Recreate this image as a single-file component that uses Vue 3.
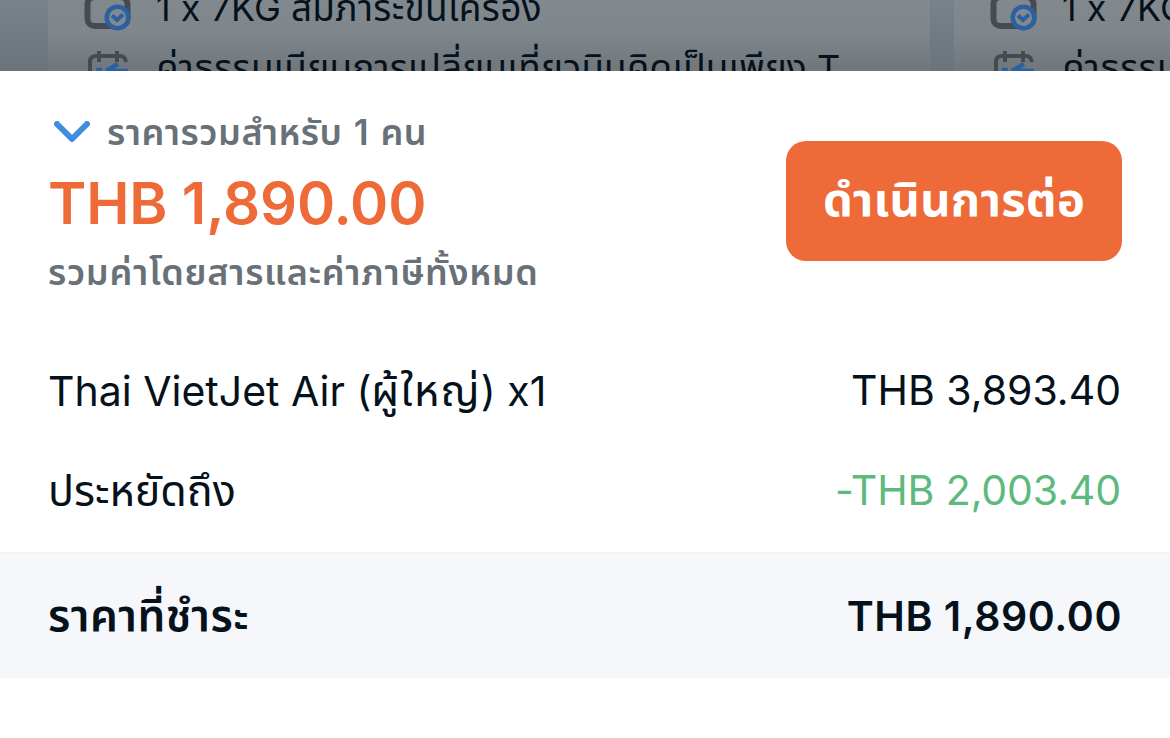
<script setup>
import { ref } from 'vue'

const aberto = ref(true)

const tarifas = [
  { id: 1, bagagem: '1 x 7KG', bagagemThai: 'สัมภาระขึ้นเครื่อง', taxa: 'ค่าธรรมเนียมการเปลี่ยนเที่ยวบินคิดเป็นเพียง', moeda: 'T' },
  { id: 2, bagagem: '1 x 7KG', bagagemThai: 'สัมภาระขึ้นเครื่อง', taxa: 'ค่าธรรมเนียมการเปลี่ยนเที่ยวบินคิดเป็นเพียง', moeda: 'T' }
]

const total = 'THB 1,890.00'
</script>

<template>
<div class="tela">
  <section class="fundo">
    <div class="tarifa" v-for="tarifa in tarifas" :key="tarifa.id">
      <div class="linha">
        <svg class="icone" viewBox="0 0 48 48">
          <rect x="3.5" y="13" width="40" height="29" rx="7" fill="none" stroke="#454b51" stroke-width="6" />
          <circle cx="33.5" cy="33.5" r="13" fill="#2c609f" />
          <circle cx="33.5" cy="33.5" r="8.5" fill="#828a91" />
          <path d="M28 31.5l5 4.5 6-5.5" fill="none" stroke="#2c609f" stroke-width="4" />
        </svg>
        <p><span class="bagagem">{{ tarifa.bagagem }}</span> <span class="bagagem-thai">{{ tarifa.bagagemThai }}</span></p>
      </div>
      <div class="linha">
        <svg class="icone" viewBox="0 0 48 48">
          <path d="M42 14q-1-6-6-6H12q-6 0-6 6v27q0 5 6 5h24M15 3v11M33 3v11" fill="none" stroke="#454b51" stroke-width="4" />
          <path d="M12 22h6M44 23H26M22 23l12-7M23 23l9 8" fill="none" stroke="#2c609f" stroke-width="4.5" />
        </svg>
        <p><span class="taxa">{{ tarifa.taxa }}</span> <span>{{ tarifa.moeda }}</span></p>
      </div>
    </div>
  </section>

  <section class="painel">
    <header class="resumo">
      <div class="valores">
        <div class="titulo" @click="aberto = !aberto">
          <svg class="seta" :class="{ fechada: !aberto }" viewBox="0 0 36 22">
            <path d="M3 3l15 15L33 3" />
          </svg>
          <p><span class="thai">ราคารวมสำหรับ</span> <span class="pessoas">1</span> <span class="thai">คน</span></p>
        </div>
        <h1>{{ total }}</h1>
        <p class="nota">รวมค่าโดยสารและค่าภาษีทั้งหมด</p>
      </div>
      <button class="continuar">ดำเนินการต่อ</button>
    </header>

    <div class="detalhes" v-if="aberto">
      <div class="item">
        <p>Thai VietJet Air (<span class="adulto">ผู้ใหญ่</span>) x1</p>
        <p class="preco">THB 3,893.40</p>
      </div>
      <div class="item">
        <p class="economia">ประหยัดถึง</p>
        <p class="preco desconto">-THB 2,003.40</p>
      </div>
    </div>

    <footer class="pagar">
      <p class="rotulo">ราคาที่ชำระ</p>
      <p class="preco">{{ total }}</p>
    </footer>
  </section>
</div>
</template>

<style>
body {
  margin: 0;
  background: #fff;
}
</style>

<style scoped>
.tela {
  height: 738px;
  overflow: hidden;
  background: #fff;
  color: #06121b;
  font-family: "Inter", "Noto Sans Thai", sans-serif;
  font-feature-settings: "calt" 0;
}

p,
h1 {
  margin: 0;
  white-space: nowrap;
}

.fundo {
  display: flex;
  gap: 24px;
  height: 71px;
  padding-left: 48px;
  overflow: hidden;
  background: linear-gradient(#78828a, #6b747c);
}

.tarifa {
  flex: 0 0 882px;
  box-sizing: border-box;
  padding-left: 36px;
  background: linear-gradient(#82898e 0%, #80878c 45%, #70777c 100%);
  overflow: hidden;
}

.linha {
  display: flex;
  align-items: center;
  gap: 24px;
  height: 58px;
  margin-top: -21px;
  font-size: 36px;
  line-height: 58px;
}

.linha + .linha {
  height: 70px;
  margin-top: 0;
}

.linha + .linha p {
  padding-bottom: 8px;
}

.bagagem-thai {
  font-size: 37px;
  letter-spacing: 0.3px;
}

.taxa {
  font-size: 37px;
  letter-spacing: 0.14px;
}

.icone {
  flex: none;
  width: 48px;
  height: 48px;
}

.linha:first-child .icone {
  margin-top: -1px;
}

.painel {
  height: 667px;
  background: #fff;
}

.resumo {
  display: flex;
  justify-content: space-between;
  align-items: flex-start;
  height: 270px;
  padding: 0 48px;
}

.valores {
  padding-top: 36px;
}

.titulo {
  display: flex;
  align-items: center;
  gap: 17px;
  height: 50px;
  padding-left: 6px;
  color: #687078;
  font-size: 36px;
  font-weight: 600;
  line-height: 46px;
}

.titulo .thai {
  letter-spacing: 0.5px;
}

.pessoas {
  margin: 0 3px 0 2px;
  font-size: 35px;
}

.seta {
  width: 36px;
  height: 22px;
}

.seta.fechada {
  transform: rotate(180deg);
}

.seta path {
  fill: none;
  stroke: #408de0;
  stroke-width: 6;
  stroke-linecap: round;
  stroke-linejoin: round;
}

h1 {
  height: 91px;
  color: #ee6a38;
  font-size: 58px;
  font-weight: 600;
  letter-spacing: -0.15px;
  line-height: 92px;
}

.nota {
  height: 50px;
  color: #687078;
  font-size: 36px;
  font-weight: 600;
  letter-spacing: 0.7px;
  line-height: 48px;
}

.continuar {
  width: 336px;
  height: 120px;
  margin-top: 70px;
  padding: 0;
  border: none;
  border-radius: 20px;
  background: #ee6a38;
  color: #fff;
  font-family: inherit;
  font-size: 47px;
  font-weight: 700;
  letter-spacing: 0.3px;
}

.detalhes {
  height: 211px;
}

.item {
  display: flex;
  justify-content: space-between;
  height: 100px;
  padding: 0 49px 0 48px;
  font-size: 41px;
  line-height: 99px;
}

.adulto {
  font-size: 43px;
  letter-spacing: 1.2px;
}

.economia {
  font-size: 43px;
  line-height: 98px;
}

.desconto {
  color: #5bba7c;
  letter-spacing: -0.1px;
}

.pagar {
  display: flex;
  justify-content: space-between;
  box-sizing: border-box;
  height: 126px;
  padding: 0 48px;
  border-top: 2px solid #f2f3f5;
  background: #f6f7fa;
  font-size: 41px;
  font-weight: 600;
  line-height: 124px;
}

.pagar .preco {
  letter-spacing: 0.55px;
}

.rotulo {
  font-size: 44px;
  letter-spacing: 0.5px;
  line-height: 122px;
}
</style>
